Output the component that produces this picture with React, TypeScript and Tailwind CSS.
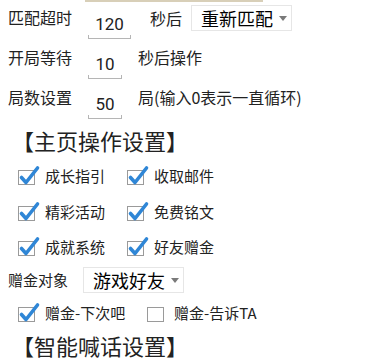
import React from "react";

function CheckBox({ checked }: { checked: boolean }) {
  return (
    <svg width="24" height="22" viewBox="0 0 24 22" className="shrink-0">
      <rect x="0.5" y="5.5" width="16" height="14" fill="#fff" stroke="#9a9a9a" />
      {checked && (
        <path
          d="M3.5 12.5 L8 17.5 L19.5 3"
          fill="none"
          stroke="#2f86d6"
          strokeWidth="3.6"
          strokeLinecap="round"
          strokeLinejoin="round"
        />
      )}
    </svg>
  );
}

function Check({ label, checked = true, w }: { label: string; checked?: boolean; w: string }) {
  return (
    <div className={`flex items-center ${w}`}>
      <CheckBox checked={checked} />
      <span className="ml-[3px] text-[15px] leading-[20px] text-[#222]">{label}</span>
    </div>
  );
}

function Field({ value, w }: { value: string; w: string }) {
  return (
    <div className={`mt-[12px] ${w} flex flex-col`}>
      <div className="text-center text-[17px] leading-[20px] font-['Roboto',sans-serif] text-[#222]">
        {value}
      </div>
      <div className="mt-[1px] h-[4px] border-x border-b border-[#b5b5b5]" />
    </div>
  );
}

function Dropdown({ text, w }: { text: string; w: string }) {
  return (
    <div className={`h-[26px] ${w} border border-[#e6e6e6] flex items-center pl-[9px] pr-[4px]`}>
      <span className="text-[18px] leading-[24px] font-normal text-[#000]">{text}</span>
      <span className="ml-auto w-0 h-0 border-x-[4px] border-x-transparent border-t-[5px] border-t-[#7a7a7a]" />
    </div>
  );
}

export default function App() {
  return (
    <div className="w-[391px] h-[363px] overflow-hidden bg-white text-[#222] font-['Noto_Sans_CJK_SC','Noto_Sans',sans-serif]">
      <div className="ml-[85px] w-[178px] h-[2px] bg-[#d8cfb8]" />

      <div className="flex h-[40px]">
        <div className="w-[88px] pl-[8px] pt-[5px] text-[16px] leading-[20px]">匹配超时</div>
        <Field value="120" w="w-[43px]" />
        <div className="ml-[19px] pt-[6px] text-[16px] leading-[20px]">秒后</div>
        <div className="ml-[9px] mt-[3px]">
          <Dropdown text="重新匹配" w="w-[101px]" />
        </div>
      </div>

      <div className="flex h-[40px]">
        <div className="w-[88px] pl-[8px] pt-[5px] text-[16px] leading-[20px]">开局等待</div>
        <Field value="10" w="w-[34px]" />
        <div className="ml-[16px] pt-[5px] text-[16px] leading-[20px]">秒后操作</div>
      </div>

      <div className="flex h-[40px]">
        <div className="w-[88px] pl-[8px] pt-[5px] text-[16px] leading-[20px]">局数设置</div>
        <Field value="50" w="w-[34px]" />
        <div className="ml-[16px] pt-[5px] text-[16px] leading-[20px]">局(输入0表示一直循环)</div>
      </div>

      <div className="pl-[12px] text-[22px] leading-[30px] h-[36px] pt-[3px]">【主页操作设置】</div>

      <div className="pl-[18px] flex flex-col">
        <div className="flex h-[36px] items-center">
          <Check label="成长指引" w="w-[109px]" />
          <Check label="收取邮件" w="w-[120px]" />
        </div>
        <div className="flex h-[36px] items-center">
          <Check label="精彩活动" w="w-[109px]" />
          <Check label="免费铭文" w="w-[120px]" />
        </div>
        <div className="flex h-[34px] items-center">
          <Check label="成就系统" w="w-[109px]" />
          <Check label="好友赠金" w="w-[120px]" />
        </div>
      </div>

      <div className="flex items-center h-[32px]">
        <div className="w-[83px] pl-[8px] text-[15px] leading-[20px]">赠金对象</div>
        <Dropdown text="游戏好友" w="w-[101px]" />
      </div>

      <div className="pl-[18px] flex h-[34px] items-center">
        <Check label="赠金-下次吧" w="w-[129px]" />
        <Check label="赠金-告诉TA" checked={false} w="w-[130px]" />
      </div>

      <div className="pl-[12px] text-[22px] leading-[30px]">【智能喊话设置】</div>
    </div>
  );
}
